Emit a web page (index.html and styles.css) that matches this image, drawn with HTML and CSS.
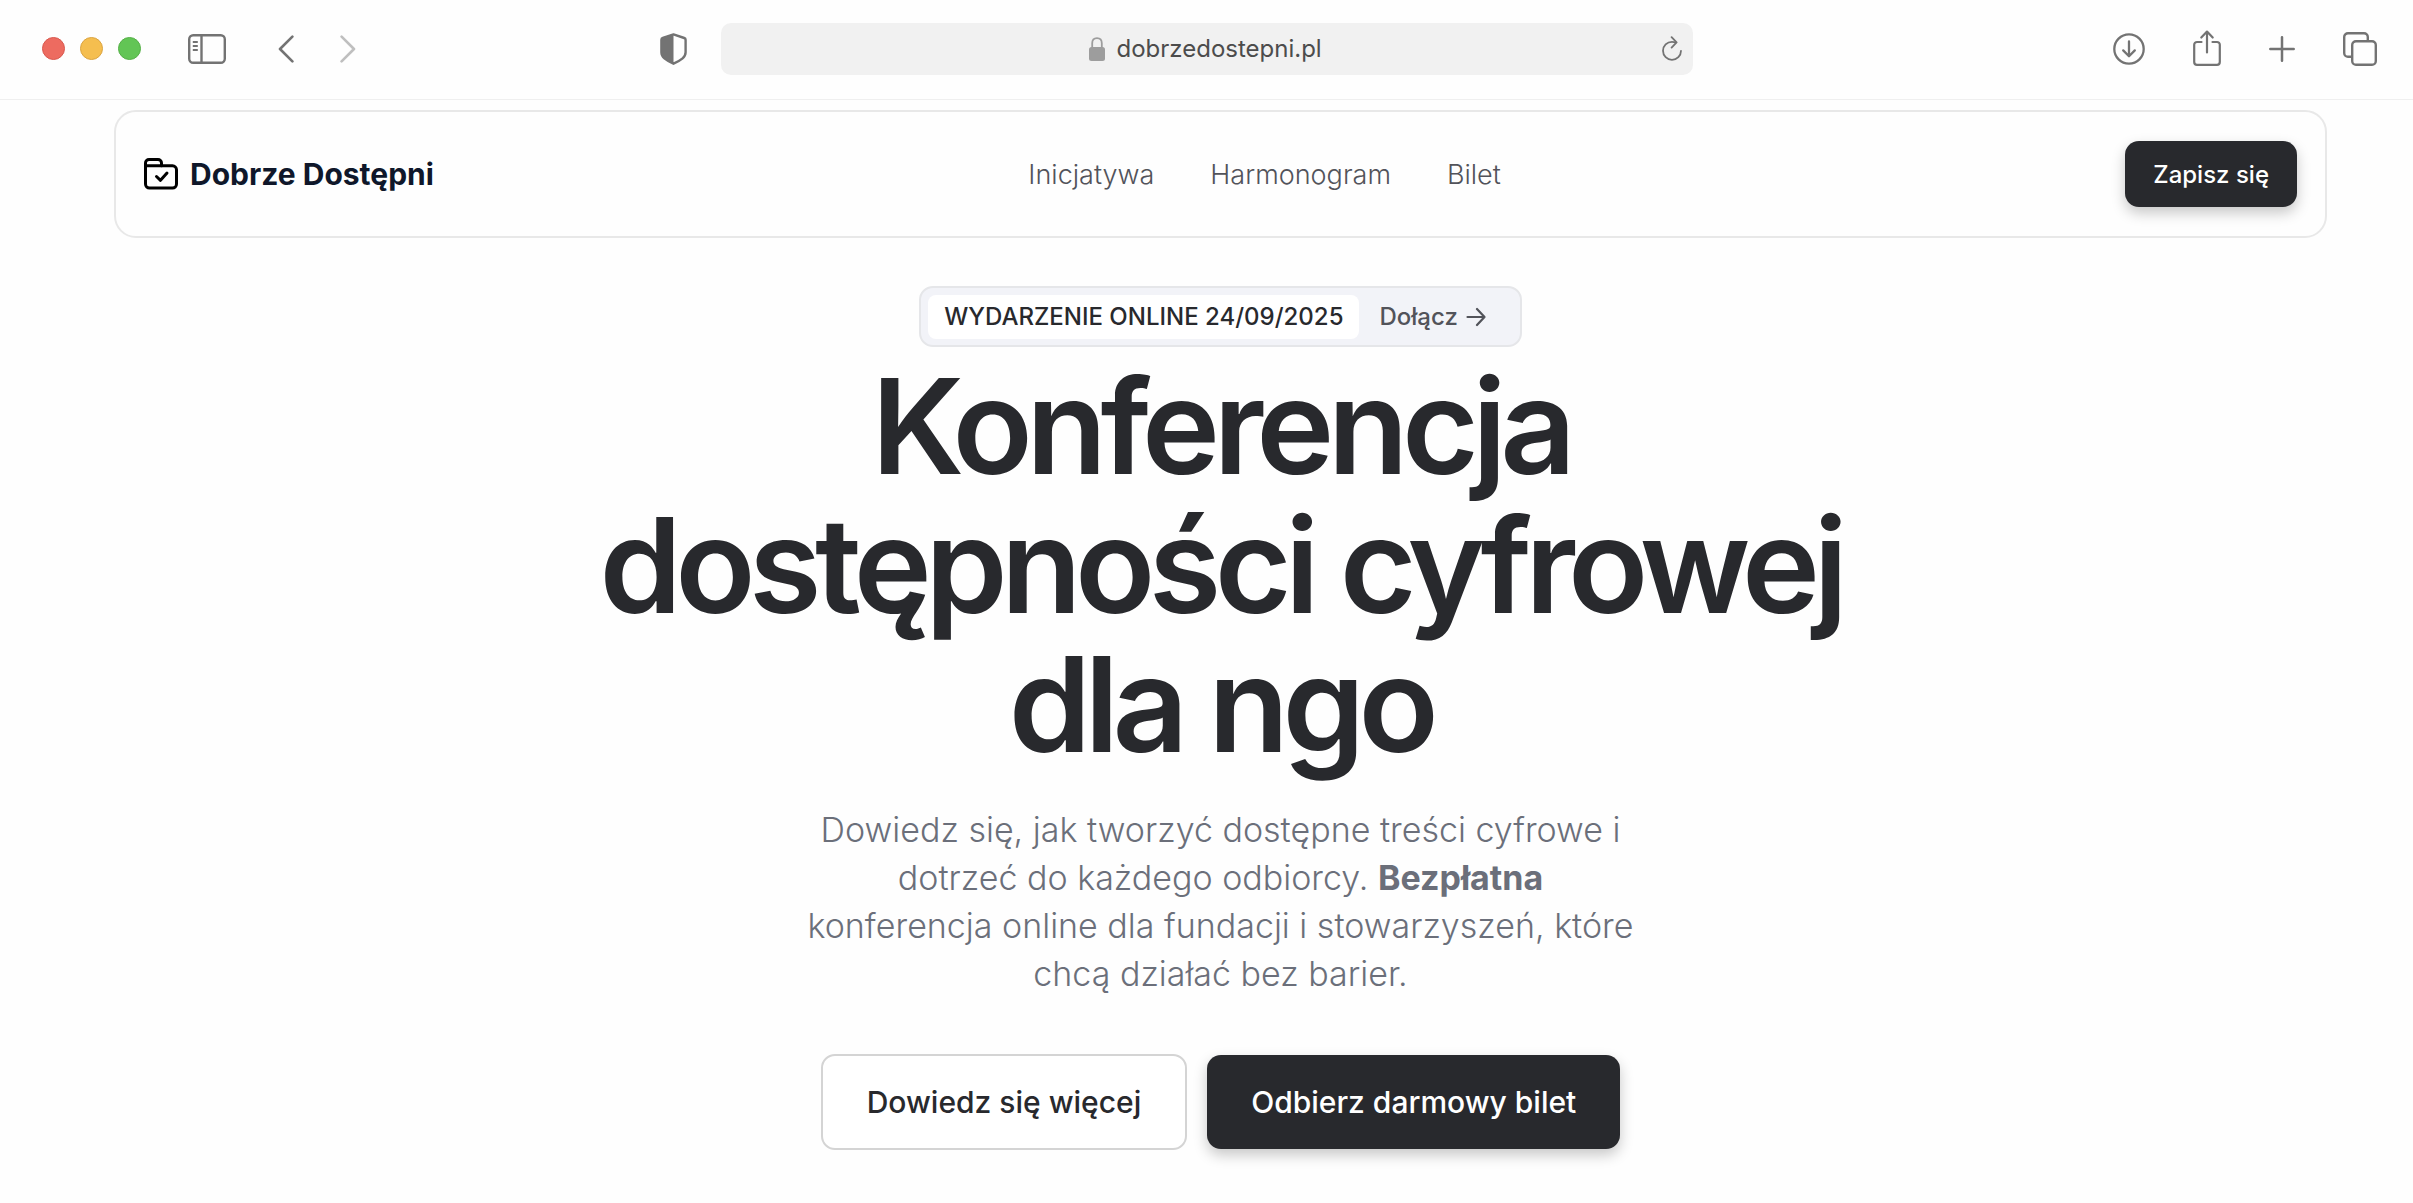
FILE: index.html
```html
<!DOCTYPE html>
<html lang="pl">
<head>
  <meta charset="UTF-8">
  <meta name="viewport" content="width=device-width, initial-scale=1">
  <title>Dobrze Dostępni</title>
  <link rel="stylesheet" href="styles.css">
</head>
<body>
  <div class="toolbar">
    <div class="toolbar-left">
      <div class="lights">
        <span class="light red"></span>
        <span class="light yellow"></span>
        <span class="light green"></span>
      </div>
      <button class="tool sidebar-btn" aria-label="Pasek boczny">
        <svg width="38" height="30" viewBox="0 0 38 30" fill="none" stroke="currentColor" stroke-width="2.4">
          <rect x="1.2" y="1.2" width="35.6" height="27.6" rx="4"/>
          <path d="M13.5 1.2v27.6"/>
          <path d="M4.8 8h5M4.8 12h5M4.8 16h5" stroke-width="1.8"/>
        </svg>
      </button>
      <button class="tool back" aria-label="Wstecz">
        <svg width="16" height="28" viewBox="0 0 16 28" fill="none" stroke="currentColor" stroke-width="2.6" stroke-linecap="round" stroke-linejoin="round"><path d="M14.4 1.6L2 14l12.4 12.4"/></svg>
      </button>
      <button class="tool forward" aria-label="Dalej" disabled>
        <svg width="16" height="28" viewBox="0 0 16 28" fill="none" stroke="currentColor" stroke-width="2.6" stroke-linecap="round" stroke-linejoin="round"><path d="M1.6 1.6L14 14 1.6 26.4"/></svg>
      </button>
      <button class="tool shield" aria-label="Raport prywatności">
        <svg width="27" height="32" viewBox="0 0 27 32" fill="none" stroke="currentColor" stroke-width="2.4" stroke-linejoin="round">
          <path d="M13.5 1.4L24.2 5c.9.3 1.4.9 1.4 1.8v12.4c0 2.5-1.1 4.5-3 6.1-2.5 2.1-5.7 3.8-9.1 5.4-3.4-1.6-6.6-3.3-9.1-5.4-1.9-1.6-3-3.6-3-6.1V6.8c0-.9.5-1.5 1.4-1.8z"/>
          <path d="M13.5 1.4v29.3C10.1 29.1 6.9 27.4 4.4 25.3c-1.9-1.6-3-3.6-3-6.1V6.8c0-.9.5-1.5 1.4-1.8z" fill="currentColor" stroke="none"/>
        </svg>
      </button>
    </div>
    <div class="address">
      <svg class="lock" width="16" height="24" viewBox="0 0 16 24" fill="none">
        <rect x="0" y="10" width="16" height="14" rx="2.5" fill="currentColor"/>
        <path d="M3.2 11V6.2C3.2 3 5.3 1.1 8 1.1s4.8 1.9 4.8 5.1V11" stroke="currentColor" stroke-width="1.8"/>
      </svg>
      <input class="url" type="text" value="dobrzedostepni.pl" aria-label="Adres strony">
      <button class="tool reload" aria-label="Odśwież">
        <svg width="20" height="26" viewBox="0 0 20 26" fill="none" stroke="currentColor" stroke-width="1.8" stroke-linecap="round" stroke-linejoin="round">
          <path d="M13.5 6.4C12.4 6 11.2 5.8 10 5.8a9 9 0 1 0 9 9"/>
          <path d="M9.6 1.2l5 5.2-5 5.2"/>
        </svg>
      </button>
    </div>
    <div class="toolbar-right">
      <button class="tool" aria-label="Pobrane">
        <svg width="32" height="32" viewBox="0 0 32 32" fill="none" stroke="currentColor" stroke-width="2.3" stroke-linecap="round" stroke-linejoin="round">
          <circle cx="16" cy="16" r="14.7"/>
          <path d="M16 8.5v14.5M10.2 17.4L16 23.2l5.8-5.8"/>
        </svg>
      </button>
      <button class="tool" aria-label="Udostępnij">
        <svg width="28" height="38" viewBox="0 0 28 38" fill="none" stroke="currentColor" stroke-width="2.2" stroke-linecap="round" stroke-linejoin="round">
          <path d="M8.5 12H4a2.8 2.8 0 0 0-2.8 2.8V32A2.8 2.8 0 0 0 4 34.8h20a2.8 2.8 0 0 0 2.8-2.8V14.8A2.8 2.8 0 0 0 24 12h-4.5"/>
          <path d="M14 22.5V1.8M8.3 7.500L14 1.600l5.700 5.900"/>
        </svg>
      </button>
      <button class="tool" aria-label="Nowa karta">
        <svg width="26" height="26" viewBox="0 0 26 26" fill="none" stroke="currentColor" stroke-width="2.5" stroke-linecap="round"><path d="M13 1.3v23.4M1.3 13h23.4"/></svg>
      </button>
      <button class="tool" aria-label="Przegląd kart">
        <svg width="34" height="34" viewBox="0 0 34 34" fill="none" stroke="currentColor" stroke-width="2.4">
          <rect x="9.2" y="9.2" width="23.6" height="23.6" rx="3.8"/>
          <path d="M9.2 24.8H5A3.8 3.8 0 0 1 1.2 21V5A3.8 3.8 0 0 1 5 1.2h16A3.8 3.8 0 0 1 24.8 5v4.2"/>
        </svg>
      </button>
    </div>
  </div>

  <div class="page">
    <header class="navbar">
      <a class="brand" href="#">
        <svg width="34" height="32" viewBox="0 0 34 32" fill="none" stroke="currentColor" stroke-width="3" stroke-linecap="round" stroke-linejoin="round">
          <path d="M1.5 8V5A3.5 3.5 0 0 1 5 1.500h9A3.500 3.500 0 0 1 17.500 5v2.800H28.500a4 4 0 0 1 4 4V26a4 4 0 0 1-4 4H5.500a4 4 0 0 1-4-4z"/>
          <path d="M1.500 7.800h16"/>
          <path d="M12.500 18.500l4 3.800 6.500-7.300"/>
        </svg>
        <span>Dobrze Dostępni</span>
      </a>
      <nav class="links">
        <a href="#inicjatywa">Inicjatywa</a>
        <a href="#harmonogram">Harmonogram</a>
        <a href="#bilet">Bilet</a>
      </nav>
      <button class="btn btn-dark btn-small">Zapisz się</button>
    </header>

    <main class="hero">
      <a class="badge" href="#bilet">
        <span class="badge-label">WYDARZENIE ONLINE 24/09/2025</span>
        <span class="badge-join">Dołącz
          <svg width="20" height="20" viewBox="0 0 20 20" fill="none" stroke="currentColor" stroke-width="2.2" stroke-linecap="round" stroke-linejoin="round"><path d="M1.5 10h17M11 2l7.5 8-7.5 8"/></svg>
        </span>
      </a>
      <h1>Konferencja<br>dostępności cyfrowej<br>dla ngo</h1>
      <p class="lead">Dowiedz się, jak tworzyć dostępne treści cyfrowe i dotrzeć do każdego odbiorcy. <strong>Bezpłatna</strong> konferencja online dla fundacji i stowarzyszeń, które chcą działać bez barier.</p>
      <div class="actions">
        <button class="btn btn-outline">Dowiedz się więcej</button>
        <button class="btn btn-dark">Odbierz darmowy bilet</button>
      </div>
    </main>
  </div>
</body>
</html>
```
FILE: styles.css
```css
* {
  box-sizing: border-box;
}
body {
  margin: 0;
  background-color: #fefefe;
  color: #28292d;
  font-family: Inter, "Liberation Sans", sans-serif;
}
a {
  color: inherit;
  text-decoration: none;
}
button {
  font-family: inherit;
  cursor: pointer;
}
svg {
  display: block;
  flex: none;
}

/* browser toolbar */
.toolbar {
  display: grid;
  grid-template-columns: 1fr minmax(0, 972px) 1fr;
  align-items: center;
  height: 100px;
  padding-bottom: 2px;
  border-bottom: 1px solid #efefef;
}
.toolbar-left {
  display: flex;
  align-items: center;
  padding: 0 34px 0 42px;
}
.lights {
  display: flex;
  gap: 15px;
}
.light {
  width: 23px;
  height: 23px;
  border-radius: 50%;
  border: 1px solid #d9584e;
  background-color: #ed6b60;
}
.yellow {
  border-color: #dba441;
  background-color: #f5be4f;
}
.green {
  border-color: #55b047;
  background-color: #62c555;
}
.tool {
  padding: 0;
  border: 0;
  background: none;
  color: #737373;
}
.sidebar-btn {
  margin-left: 47px;
}
.back {
  margin-left: 52px;
}
.forward {
  margin-left: 46px;
  color: #bfbfbf;
}
.shield {
  margin-left: auto;
}
.address {
  position: relative;
  display: flex;
  align-items: center;
  justify-content: center;
  gap: 12px;
  height: 52px;
  border-radius: 10px;
  background-color: #f1f1f1;
}
.lock {
  color: #9d9d9d;
}
.url {
  width: 208px;
  padding: 0;
  border: 0;
  background: none;
  color: #4c4c4c;
  font-family: Inter, sans-serif;
  font-size: 24px;
}
.reload {
  position: absolute;
  right: 11px;
}
.toolbar-right {
  display: flex;
  align-items: center;
  justify-content: flex-end;
  gap: 48px;
  padding-right: 36px;
}

/* page */
.page {
  padding: 10px 86px 48px 114px;
}
.navbar {
  display: flex;
  align-items: center;
  justify-content: space-between;
  height: 128px;
  padding: 0 28px;
  border: 2px solid #e8e8e8;
  border-radius: 22px;
}
.brand {
  display: flex;
  align-items: center;
  gap: 12px;
  color: #0f172a;
  font-size: 30px;
  font-weight: 700;
}
.brand svg {
  color: #000;
}
.links {
  display: flex;
  gap: 56px;
  margin-right: 30px;
  color: #52535a;
  font-size: 27px;
  font-weight: 300;
}
.btn {
  height: 96px;
  padding: 0 44px;
  border: 2px solid transparent;
  border-radius: 14px;
  font-size: 30px;
  font-weight: 500;
}
.btn-dark {
  height: 94px;
  border: 0;
  background-color: #28292d;
  color: #fff;
  box-shadow: 0 6px 14px rgba(0, 0, 0, 0.22);
}
.btn-outline {
  border-color: #d4d4d4;
  background-color: #fff;
  color: #28292d;
}
.btn-small {
  height: 66px;
  padding: 0 28px;
  font-size: 24px;
}

.hero {
  display: flex;
  flex-direction: column;
  align-items: center;
  padding-top: 48px;
  text-align: center;
}
.badge {
  display: flex;
  align-items: center;
  height: 61px;
  padding: 0 34px 0 7px;
  border: 2px solid #e5e6e9;
  border-radius: 14px;
  background-color: #f2f3f8;
  font-size: 24px;
  font-weight: 500;
}
.badge-label {
  padding: 0 16px;
  border-radius: 8px;
  background-color: #fff;
  line-height: 44px;
}
.badge-join {
  display: flex;
  align-items: center;
  gap: 8px;
  padding-left: 20px;
  color: #52535a;
}
h1 {
  margin: 10px 0 0;
  font-size: 132px;
  font-weight: 600;
  line-height: 139px;
  letter-spacing: -0.05em;
}
.lead {
  max-width: 836px;
  margin: 32px 0 0;
  color: #6b6f7a;
  font-size: 34px;
  font-weight: 300;
  line-height: 48px;
}
.lead strong {
  font-weight: 700;
}
.actions {
  display: flex;
  align-items: center;
  gap: 20px;
  margin-top: 56px;
}
```
